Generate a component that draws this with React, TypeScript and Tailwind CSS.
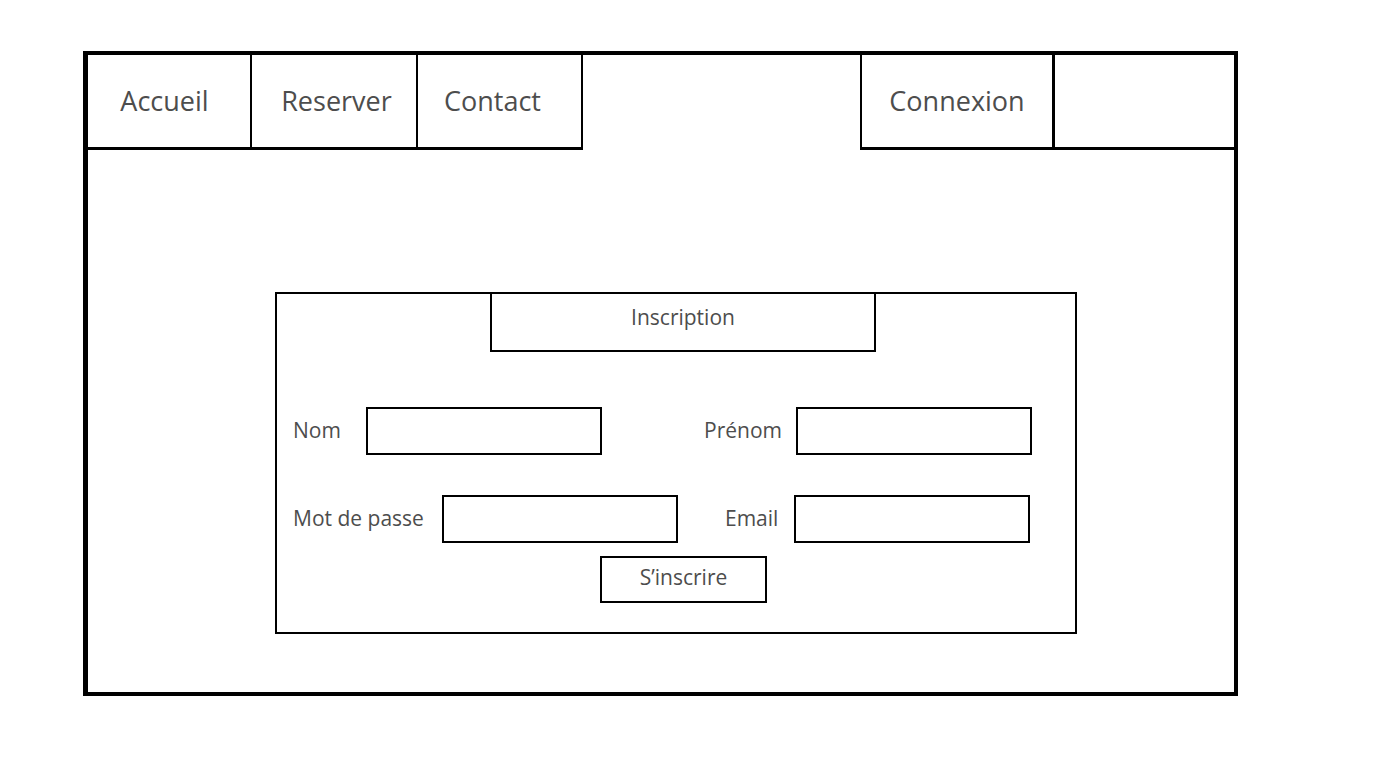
import React from "react";

const NAV_LEFT = [
  { label: "Accueil", cls: "w-[164px] pr-[9px]" },
  { label: "Reserver", cls: "w-[166px] pl-[5px]" },
  { label: "Contact", cls: "w-[165px] pr-[14px]" },
];

function Field({ w }: { w: string }) {
  return <div className={`${w} h-[48px] border-2 border-black bg-white`} />;
}

export default function App() {
  return (
    <div
      className="h-[768px] w-[1378px] bg-white pt-[51px] pl-[83px] text-[#4d4d4d]"
      style={{ fontFamily: '"Open Sans", "Noto Sans", sans-serif' }}
    >
      <div className="w-[1155px] h-[645px] border-[4px] border-l-[5px] border-black flex flex-col">
        {/* Nav */}
        <div className="flex h-[95px]">
          {NAV_LEFT.map((t) => (
            <div
              key={t.label}
              className={`${t.cls} h-full flex items-center justify-center border-r-2 border-b-[3px] border-black text-[27px]`}
            >
              {t.label}
            </div>
          ))}
          <div className="w-[277px]" />
          <div className="w-[195px] h-full flex items-center justify-center border-l-2 border-r-[3px] border-b-[3px] border-black text-[27px]">
            Connexion
          </div>
          <div className="flex-1 h-full border-b-[3px] border-black" />
        </div>

        {/* Registration form */}
        <div className="mt-[142px] ml-[187px] w-[802px] h-[342px] border-2 border-black flex flex-col">
          <div className="ml-[213px] w-[386px] h-[58px] border-x-2 border-b-2 border-black flex items-center justify-center text-[21px] pb-[8px]">
            Inscription
          </div>

          <div className="mt-[55px] pl-[16px] flex items-center text-[21px]">
            <span className="w-[73px]">Nom</span>
            <Field w="w-[236px]" />
            <span className="ml-[102px] w-[92px]">Prénom</span>
            <Field w="w-[236px]" />
          </div>

          <div className="mt-[40px] pl-[16px] flex items-center text-[21px]">
            <span className="w-[149px]">Mot de passe</span>
            <Field w="w-[236px]" />
            <span className="ml-[47px] w-[69px]">Email</span>
            <Field w="w-[236px]" />
          </div>

          <div className="mt-[13px] ml-[323px]">
            <button
              type="button"
              className="w-[167px] h-[47px] border-2 border-black flex items-center justify-center text-[21px] pb-[4px]"
            >
              S’inscrire
            </button>
          </div>
        </div>
      </div>
    </div>
  );
}
